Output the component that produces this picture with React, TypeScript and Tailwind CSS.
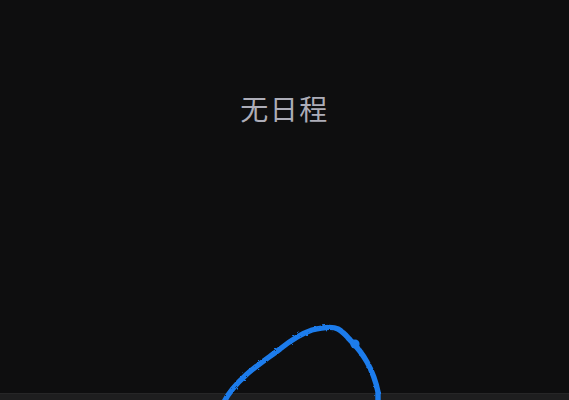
import React from 'react';

const App: React.FC = () => {
  return (
    <div className="relative w-[569px] h-[400px] overflow-hidden flex flex-col bg-[#0e0e0f] font-['Roboto','Noto_Sans_CJK_SC',sans-serif]">
      <div className="flex-1 flex justify-center pt-[91px]">
        <span className="text-[28px] leading-[40px] tracking-[1.5px] text-[#adadb8]">无日程</span>
      </div>
      <div className="h-[7px] bg-[#1e1e1f] border-t border-[#262627]" />
      {/* hand drawn ring over the page */}
      <svg className="absolute left-0 top-0" width="569" height="400" viewBox="0 0 569 400" fill="none">
        <defs>
          <filter id="rough" x="-10%" y="-10%" width="120%" height="120%">
            <feTurbulence type="fractalNoise" baseFrequency="0.35" numOctaves="2" seed="4" />
            <feDisplacementMap in="SourceGraphic" scale="2.5" />
            <feGaussianBlur stdDeviation="0.4" />
          </filter>
        </defs>
        <g filter="url(#rough)">
          <path
            d="M224 402C229 392 236 384 246 375C256 366 268 358 280 349C290 341 300 334 312 330C320 328 332 326 338 329C344 332 347 337 352 342C358 348 363 355 367 362C372 371 376 382 378 392L378 402"
            stroke="#1c7cec"
            strokeWidth="5.4"
            strokeLinecap="round"
            strokeLinejoin="round"
          />
          <circle cx="355" cy="344" r="4.6" fill="#1c7cec" />
        </g>
      </svg>
    </div>
  );
};

export default App;
